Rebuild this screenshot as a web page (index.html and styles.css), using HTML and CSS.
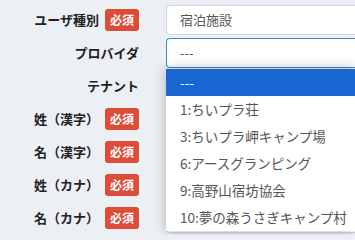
FILE: index.html
```html
<!DOCTYPE html>
<html lang="ja">
<head>
<meta charset="utf-8">
<link rel="stylesheet" href="styles.css">
</head>
<body>
<div class="form">
  <div class="row">
    <div class="label"><span>ユーザ種別</span><span class="req">必須</span></div>
    <div class="field"><div class="control">宿泊施設</div></div>
  </div>
  <div class="row">
    <div class="label"><span>プロバイダ</span></div>
    <div class="field">
      <div class="control focus">---</div>
      <ul class="dropdown">
        <li class="sel">---</li>
        <li>1:ちいプラ荘</li>
        <li>3:ちいプラ岬キャンプ場</li>
        <li>6:アースグランピング</li>
        <li>9:高野山宿坊協会</li>
        <li>10:夢の森うさぎキャンプ村</li>
      </ul>
    </div>
  </div>
  <div class="row">
    <div class="label"><span>テナント</span></div>
    <div class="field"><div class="control"></div></div>
  </div>
  <div class="row">
    <div class="label"><span>姓（漢字）</span><span class="req">必須</span></div>
    <div class="field"><div class="control"></div></div>
  </div>
  <div class="row">
    <div class="label"><span>名（漢字）</span><span class="req">必須</span></div>
    <div class="field"><div class="control"></div></div>
  </div>
  <div class="row">
    <div class="label"><span>姓（カナ）</span><span class="req">必須</span></div>
    <div class="field"><div class="control"></div></div>
  </div>
  <div class="row">
    <div class="label"><span>名（カナ）</span><span class="req">必須</span></div>
    <div class="field"><div class="control"></div></div>
  </div>
</div>
</body>
</html>
```
FILE: styles.css
```css
html, body {
  margin: 0;
  padding: 0;
  background: #ecf0f5;
  overflow: hidden;
}
body {
  font-family: "Noto Sans CJK JP", "Noto Sans", sans-serif;
  font-size: 13px;
  color: #222;
  width: 355px;
  height: 235px;
}
.form {
  display: flex;
  flex-direction: column;
  padding-top: 3px;
}
.row {
  display: flex;
  align-items: center;
  padding: 2px 0 1px;
  height: 30px;
}
.label {
  width: 139px;
  display: flex;
  justify-content: flex-end;
  align-items: center;
  gap: 6px;
  font-weight: bold;
  font-size: 13px;
  line-height: 22px;
  flex-shrink: 0;
}
.req {
  background: #dd4b39;
  color: #fff;
  font-size: 12px;
  line-height: 22px;
  height: 22px;
  padding: 0 5px;
  border-radius: 3px;
  font-weight: bold;
}
.field {
  margin-left: 27px;
  position: relative;
  flex: 1;
  min-width: 0;
}
.control {
  box-sizing: border-box;
  height: 30px;
  border: 1px solid #d2d6de;
  border-right-width: 0;
  border-radius: 4px 0 0 4px;
  background: #fff;
  padding: 0 13px;
  line-height: 28px;
  color: #555;
  font-size: 13px;
  white-space: nowrap;
}
.control.focus {
  border-color: #3c8dbc;
}
.dropdown {
  position: absolute;
  top: 31px;
  left: 0;
  right: 0;
  margin: 0;
  padding: 0;
  list-style: none;
  background: #fff;
  box-shadow: 0 0 12px rgba(0, 0, 0, 0.28);
  z-index: 5;
  color: #555;
  font-size: 13.5px;
  white-space: nowrap;
}
.dropdown li {
  height: 27px;
  line-height: 27px;
  padding-left: 14px;
}
.dropdown li.sel {
  background: #1967d2;
  color: #fff;
}
```
